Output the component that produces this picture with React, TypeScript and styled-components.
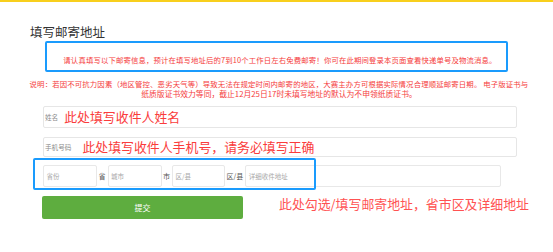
import React from "react";
import styled, { createGlobalStyle } from "styled-components";

const Global = createGlobalStyle`
  html, body { margin: 0; padding: 0; background: #fff; }
  body { font-family: "Noto Sans CJK SC", "Noto Sans", sans-serif; width: 553px; height: 252px; overflow: hidden; }
`;

const Page = styled.div`
  display: flex;
  flex-direction: column;
  width: 553px;
`;

const TopBar = styled.div`
  height: 2px;
  background: #f8cf1d;
`;

const Title = styled.div`
  margin: 22px 0 0 30px;
  font-size: 12.5px;
  line-height: 15px;
  height: 15px;
  color: #333;
`;

const Notice = styled.div`
  box-sizing: border-box;
  margin: 2px 0 0 45px;
  width: 463px;
  height: 31px;
  border: 2px solid #1a9bfd;
  border-radius: 2px;
  padding-top: 12px;
  padding-left: 7px;
  text-align: center;
  font-size: 7.4px;
  letter-spacing: 0.12px;
  line-height: 10px;
  color: #f53b3b;
  white-space: nowrap;
`;

const Explain = styled.div`
  margin-top: 7px;
  padding-left: 5px;
  text-align: center;
  line-height: 10px;
  color: #f53b3b;
  white-space: nowrap;
`;

const ExplainLine = styled.div<{ $size: number; $spacing: number }>`
  font-size: ${(p) => p.$size}px;
  letter-spacing: ${(p) => p.$spacing}px;
`;

const Form = styled.div`
  display: flex;
  flex-direction: column;
  padding-left: 43px;
`;

const Field = styled.div<{ $top: number; $h: number }>`
  box-sizing: border-box;
  margin-top: ${(p) => p.$top}px;
  width: 474px;
  height: ${(p) => p.$h}px;
  border: 1px solid #e6e6e6;
  border-radius: 2px;
  display: flex;
  align-items: center;
  padding-left: 1px;
`;

const FieldLabel = styled.span<{ $gap: number }>`
  font-size: 6.6px;
  color: #8a8a8a;
  margin-right: ${(p) => p.$gap}px;
  white-space: nowrap;
`;

const Hint = styled.span`
  font-size: 12.9px;
  line-height: 16px;
  color: #fa3c3c;
  white-space: nowrap;
`;

const AddressRow = styled.div`
  position: relative;
  margin-top: 8px;
  height: 22px;
  display: flex;
  align-items: center;
`;

const AddrInput = styled.div<{ $w: number }>`
  box-sizing: border-box;
  width: ${(p) => p.$w}px;
  height: 22px;
  border: 1px solid #e8e8e8;
  border-radius: 2px;
  display: flex;
  align-items: center;
  padding-left: 2.5px;
  font-size: 6.5px;
  color: #a8a8a8;
  white-space: nowrap;
`;

const Suffix = styled.span`
  margin: 0 2px 0 1.5px;
  font-size: 7px;
  color: #555;
  white-space: nowrap;
`;

const Highlight = styled.div`
  position: absolute;
  left: -10px;
  top: -7px;
  width: 283px;
  height: 32px;
  box-sizing: border-box;
  border: 2px solid #1a9bfd;
  border-radius: 2px;
  pointer-events: none;
`;

const ButtonRow = styled.div`
  display: flex;
  align-items: flex-start;
  margin-top: 9px;
`;

const Submit = styled.button`
  box-sizing: border-box;
  width: 201px;
  height: 23px;
  margin-left: -1px;
  border: none;
  border-radius: 2px;
  background: #5ead3f;
  color: #fff;
  font-family: inherit;
  font-size: 8px;
  padding: 0;
`;

const SideNote = styled.span`
  margin-left: 36px;
  font-size: 12.9px;
  line-height: 16px;
  color: #ff5252;
  white-space: nowrap;
`;

export default function App() {
  return (
    <Page>
      <Global />
      <TopBar />
      <Title>填写邮寄地址</Title>
      <Notice>
        请认真填写以下邮寄信息，预计在填写地址后的7到10个工作日左右免费邮寄！你可在此期间登录本页面查看快递单号及物流消息。
      </Notice>
      <Explain>
        <ExplainLine $size={7.4} $spacing={0.14}>
          说明：若因不可抗力因素（地区管控、恶劣天气等）导致无法在规定时间内邮寄的地区，大赛主办方可根据实际情况合理顺延邮寄日期。 电子版证书与
        </ExplainLine>
        <ExplainLine $size={7.8} $spacing={0}>
          纸质版证书效力等同，截止12月25日17时未填写地址的默认为不申领纸质证书。
        </ExplainLine>
      </Explain>
      <Form>
        <Field $top={7} $h={22}>
          <FieldLabel $gap={6}>姓名</FieldLabel>
          <Hint>此处填写收件人姓名</Hint>
        </Field>
        <Field $top={9} $h={20}>
          <FieldLabel $gap={11}>手机号码</FieldLabel>
          <Hint>此处填写收件人手机号，请务必填写正确</Hint>
        </Field>
        <AddressRow>
          <AddrInput $w={54}>省份</AddrInput>
          <Suffix>省</Suffix>
          <AddrInput $w={54}>城市</AddrInput>
          <Suffix>市</Suffix>
          <AddrInput $w={53}>区/县</AddrInput>
          <Suffix>区/县</Suffix>
          <AddrInput $w={256}>详细收件地址</AddrInput>
          <Highlight />
        </AddressRow>
        <ButtonRow>
          <Submit>提交</Submit>
          <SideNote>此处勾选/填写邮寄地址，省市区及详细地址</SideNote>
        </ButtonRow>
      </Form>
    </Page>
  );
}
